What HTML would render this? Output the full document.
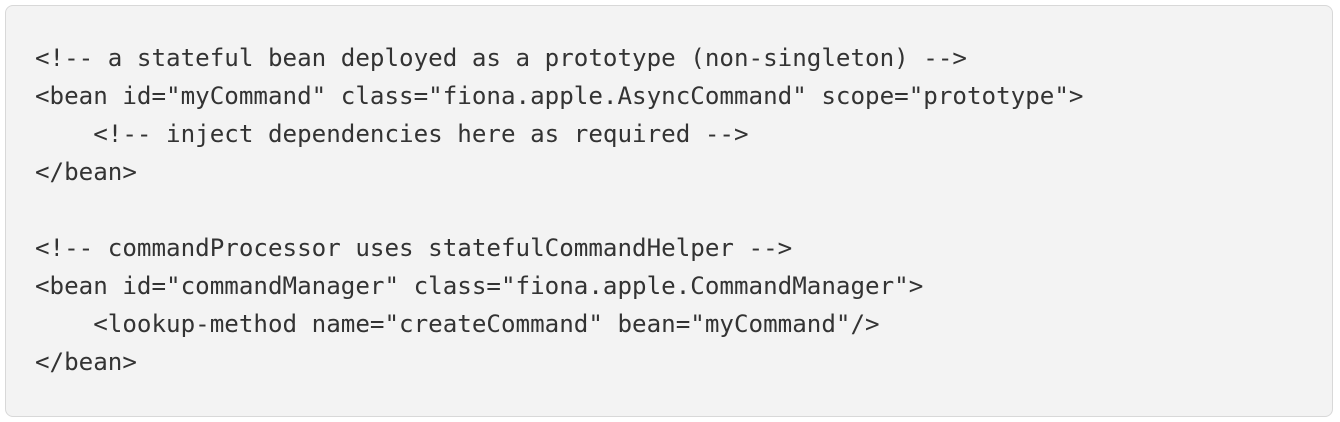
<!DOCTYPE html>
<html><head><style>
html,body{margin:0;padding:0;background:#fff;width:1340px;height:422px;overflow:hidden}
.box{position:absolute;left:5px;top:5px;width:1328px;height:412px;box-sizing:border-box;border:1px solid #d8d8d8;border-radius:8px;background:#f3f3f3}
pre{position:absolute;left:35px;top:39px;margin:0;font-family:"DejaVu Sans Mono",monospace;font-size:24.2px;line-height:38px;color:#333;white-space:pre}
</style></head><body>
<div class="box"></div>
<pre>&lt;!-- a stateful bean deployed as a prototype (non-singleton) --&gt;
&lt;bean id="myCommand" class="fiona.apple.AsyncCommand" scope="prototype"&gt;
    &lt;!-- inject dependencies here as required --&gt;
&lt;/bean&gt;

&lt;!-- commandProcessor uses statefulCommandHelper --&gt;
&lt;bean id="commandManager" class="fiona.apple.CommandManager"&gt;
    &lt;lookup-method name="createCommand" bean="myCommand"/&gt;
&lt;/bean&gt;</pre>
</body></html>
